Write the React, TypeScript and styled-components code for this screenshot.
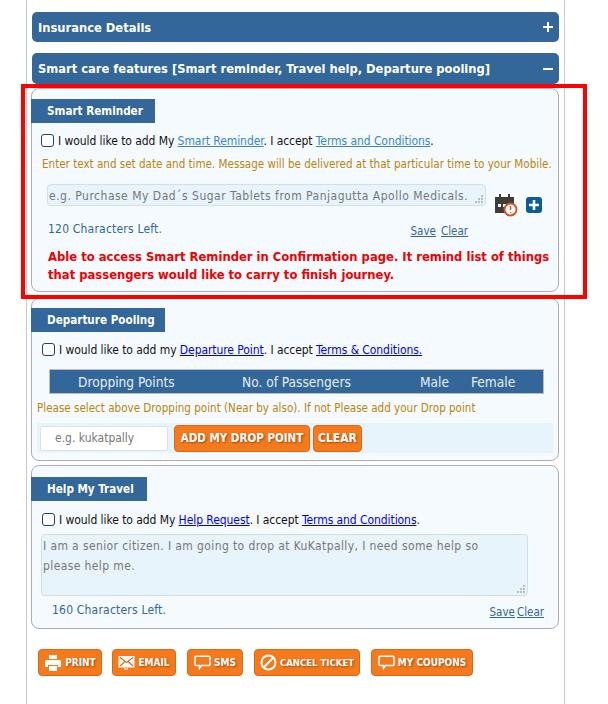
import styled, { createGlobalStyle } from 'styled-components';

const GlobalStyle = createGlobalStyle`
  html, body {
    margin: 0;
    padding: 0;
    background: #fff;
    height: 704px;
    overflow: hidden;
  }
  body {
    font-family: "DejaVu Sans", "Noto Sans", sans-serif;
    font-stretch: condensed;
    font-size: 12px;
    color: #111;
  }
`;

const Page = styled.div`
  position: relative;
  width: 608px;
  height: 704px;
  overflow: hidden;
`;

const Column = styled.div`
  box-sizing: border-box;
  margin-left: 26px;
  width: 539px;
  height: 704px;
  padding: 12px 5px 0 5px;
  border-left: 1px solid #c8c8c8;
  border-right: 1px solid #c8c8c8;
`;

const AccordionBar = styled.div<{ $gap: number; $height: number }>`
  box-sizing: border-box;
  display: flex;
  align-items: center;
  justify-content: space-between;
  width: 527px;
  height: ${p => p.$height}px;
  padding: 0 5px 0 6px;
  margin-bottom: ${p => p.$gap}px;
  background: #336699;
  border-radius: 5px;
  color: #fff;
  font-weight: 700;
  font-size: 12.8px;
`;

const Panel = styled.section<{ $height: number; $gap: number; $pad: number }>`
  box-sizing: border-box;
  height: ${p => p.$height}px;
  margin-bottom: ${p => p.$gap}px;
  margin-left: -1px;
  width: 528px;
  padding-top: ${p => p.$pad}px;
  background: #f5faff;
  border: 1px solid #aeaeae;
  border-radius: 8px;
`;

const PanelTitle = styled.div<{ $width: number }>`
  box-sizing: border-box;
  width: ${p => p.$width}px;
  height: 24px;
  margin-left: -1px;
  padding-left: 16px;
  background: #336699;
  color: #fff;
  font-weight: 700;
  font-size: 11.6px;
  line-height: 25px;
`;

const ConsentRow = styled.label<{ $left: number; $top: number }>`
  display: flex;
  align-items: center;
  gap: 4px;
  margin: ${p => p.$top}px 0 0 ${p => p.$left}px;
  height: 18px;
  color: #111;
  font-size: 12px;
  letter-spacing: -0.07px;
  white-space: nowrap;
`;

const Box = styled.span`
  box-sizing: border-box;
  display: inline-block;
  width: 13px;
  height: 13px;
  background: #fff;
  border: 1px solid #27406b;
  border-radius: 3px;
  flex: none;
  margin-top: -2px;
`;

const Link = styled.a<{ $soft?: boolean }>`
  color: ${p => (p.$soft ? '#3b86c6' : '#0000ee')};
  text-decoration: underline;
  cursor: pointer;
`;

const Hint = styled.p<{ $left: number; $top: number }>`
  margin: ${p => p.$top}px 0 0 ${p => p.$left}px;
  color: #b8860b;
  font-size: 11.55px;
  line-height: 16px;
  white-space: nowrap;
`;

const ReminderRow = styled.div<{ $top: number; $left: number }>`
  display: flex;
  align-items: flex-start;
  margin: ${p => p.$top}px 0 0 ${p => p.$left}px;
`;

const NoteField = styled.div<{ $width: number; $height: number; $spacing: number; $inset: number }>`
  box-sizing: border-box;
  position: relative;
  width: ${p => p.$width}px;
  height: ${p => p.$height}px;
  padding: 1px ${p => p.$inset}px 1px 1px;
  background: #e8f4fc;
  border: 1px solid #d6dde3;
  border-radius: 4px;
  color: #777;
  font-size: 12px;
  letter-spacing: ${p => p.$spacing}px;
  line-height: 20px;
`;

const Grip = styled.svg`
  position: absolute;
  right: 1px;
  bottom: 1px;
`;

const IconSlot = styled.svg<{ $left: number; $top: number }>`
  flex: none;
  margin: ${p => p.$top}px 0 0 ${p => p.$left}px;
`;

const ActionRow = styled.div<{ $top: number; $left: number; $right: number }>`
  display: flex;
  align-items: center;
  justify-content: space-between;
  margin: ${p => p.$top}px ${p => p.$right}px 0 ${p => p.$left}px;
  height: 18px;
`;

const Remaining = styled.span`
  color: #336699;
  font-size: 12px;
  letter-spacing: 0.2px;
`;

const SmallLinks = styled.span<{ $gap: number }>`
  display: flex;
  gap: ${p => p.$gap}px;
  margin-top: 3px;
`;

const QuietLink = styled.a`
  color: #336699;
  font-size: 11.5px;
  text-decoration: underline;
  cursor: pointer;
`;

const Notice = styled.p`
  margin: 10px 0 0 16px;
  color: #f00000;
  font-weight: 700;
  font-size: 12.9px;
  line-height: 18px;
  white-space: nowrap;
`;

const TableHead = styled.div`
  box-sizing: border-box;
  display: grid;
  grid-template-columns: 164px 178px 51px 74px;
  align-items: center;
  width: 495px;
  height: 25px;
  margin: 10px 0 0 17px;
  background: #336699;
  border: 1px solid #bcbcbc;
  color: #e6eef6;
  font-size: 13.6px;
  padding-left: 28px;
`;

const DropRow = styled.div`
  display: flex;
  align-items: center;
  width: 516px;
  height: 30px;
  margin: 7px 0 0 5px;
  padding-left: 3px;
  box-sizing: border-box;
  background: #e8f4fc;
`;

const DropInput = styled.div`
  box-sizing: border-box;
  width: 128px;
  height: 25px;
  padding-left: 14px;
  background: #fff;
  border: 1px solid #dde2e8;
  border-radius: 2px;
  color: #777;
  font-size: 12px;
  line-height: 23px;
`;

const OrangeButton = styled.button<{ $left: number; $width: number; $size: number }>`
  box-sizing: border-box;
  display: inline-flex;
  align-items: center;
  justify-content: center;
  gap: 3px;
  flex: none;
  width: ${p => p.$width}px;
  height: 27px;
  margin-left: ${p => p.$left}px;
  padding: 0;
  background: #f47a1c;
  border: 1px solid #d9681f;
  border-radius: 4px;
  color: #fff;
  font-family: inherit;
  font-stretch: condensed;
  font-weight: 700;
  font-size: ${p => p.$size}px;
  text-shadow: 1px 1px 2px #9c4a10;
  white-space: nowrap;
`;

const ButtonBar = styled.div`
  display: flex;
  margin: 20px 0 0 6px;
`;

const Annotation = styled.div`
  position: absolute;
  left: 21px;
  top: 84px;
  width: 566px;
  height: 215px;
  box-sizing: border-box;
  border: 4px solid #ff0000;
  pointer-events: none;
`;

const grip = (
  <Grip width="10" height="10" viewBox="0 0 10 10" fill="#b5bcc2">
    <rect x="7" y="1" width="2" height="2" />
    <rect x="4" y="4" width="2" height="2" />
    <rect x="7" y="4" width="2" height="2" />
    <rect x="1" y="7" width="2" height="2" />
    <rect x="4" y="7" width="2" height="2" />
    <rect x="7" y="7" width="2" height="2" />
  </Grip>
);

const CalendarClock = () => (
  <IconSlot $left={8} $top={9} width="24" height="24" viewBox="0 0 24 24">
    <rect width="24" height="24" fill="#fff" />
    <path d="M1 4h4V1h2v3h7V1h2v3h4v9a6 6 0 0 0-7 7H1z" fill="#3d3d3d" />
    <rect x="4" y="11" width="3" height="3" fill="#fff" />
    <rect x="9" y="11" width="3" height="3" fill="#fff" />
    <circle cx="16.5" cy="16.5" r="6" fill="#fff" stroke="#dd4b17" strokeWidth="1.8" />
    <path d="M16.5 13v4M16.5 19v1" stroke="#dd4b17" strokeWidth="1.4" />
  </IconSlot>
);

const PlusTile = () => (
  <IconSlot $left={8} $top={13} width="16" height="16" viewBox="0 0 16 16">
    <rect width="16" height="16" rx="3" fill="#0b5c9e" />
    <path d="M8 3v10M3 8h10" stroke="#fff" strokeWidth="2.6" />
  </IconSlot>
);

const PrintIcon = () => (
  <svg width="18" height="18" viewBox="0 0 18 18" fill="#fff">
    <path d="M5 1h8v4H5z" />
    <path d="M2 6h14a2 2 0 0 1 1 2v5h-3v-2H4v2H1V8a2 2 0 0 1 1-2z" />
    <path d="M5 12h8v5H5z" />
  </svg>
);

const MailIcon = () => (
  <svg width="17" height="15" viewBox="0 0 17 15">
    <rect x="0.5" y="1" width="16" height="11.5" fill="#fff" />
    <path d="M2 2.5l6.5 5 6.5-5M2 11l5-4.5M15 11l-5-4.5" stroke="#d9681f" strokeWidth="1.2" fill="none" />
    <path d="M6 14h4" stroke="#fff" />
  </svg>
);

const ChatIcon = () => (
  <svg width="17" height="15" viewBox="0 0 17 15" fill="none">
    <path d="M2 1.2h13a1 1 0 0 1 1 1v7.2a1 1 0 0 1-1 1H7.5L5.5 13.5v-3.1H2a1 1 0 0 1-1-1V2.2a1 1 0 0 1 1-1z" stroke="#fff" strokeWidth="1.5" />
  </svg>
);

const BanIcon = () => (
  <svg width="17" height="17" viewBox="0 0 17 17" fill="none" stroke="#fff" strokeWidth="2">
    <circle cx="8.5" cy="8.5" r="7" />
    <path d="M3.8 13.2l9.4-9.4" />
  </svg>
);

export default function App() {
  return (
    <Page>
      <GlobalStyle />
      <Column>
        <AccordionBar $gap={11} $height={30}>
          Insurance Details
          <svg width="12" height="12" viewBox="0 0 12 12"><path d="M6 1v10M1 6h10" stroke="#fff" strokeWidth="2" /></svg>
        </AccordionBar>
        <AccordionBar $gap={4} $height={31}>
          Smart care features [Smart reminder, Travel help, Departure pooling]
          <svg width="12" height="12" viewBox="0 0 12 12"><path d="M1 6h10" stroke="#fff" strokeWidth="2" /></svg>
        </AccordionBar>

        <Panel $height={204} $gap={6} $pad={10}>
          <PanelTitle $width={124}>Smart Reminder</PanelTitle>
          <ConsentRow $left={9} $top={9}>
            <Box />
            <span>I would like to add My <Link $soft>Smart Reminder</Link>. I accept <Link $soft>Terms and Conditions</Link>.</span>
          </ConsentRow>
          <Hint $left={10} $top={6}>Enter text and set date and time. Message will be delivered at that particular time to your Mobile.</Hint>
          <ReminderRow $top={12} $left={15}>
            <NoteField $width={439} $height={22} $spacing={0.5} $inset={2}>
              e.g. Purchase My Dad´s Sugar Tablets from Panjagutta Apollo Medicals.
              {grip}
            </NoteField>
            <CalendarClock />
            <PlusTile />
          </ReminderRow>
          <ActionRow $top={3} $left={16} $right={90}>
            <Remaining>120 Characters Left.</Remaining>
            <SmallLinks $gap={5}><QuietLink>Save</QuietLink><QuietLink>Clear</QuietLink></SmallLinks>
          </ActionRow>
          <Notice>
            Able to access Smart Reminder in Confirmation page. It remind list of things<br />
            that passengers would like to carry to finish journey.
          </Notice>
        </Panel>

        <Panel $height={163} $gap={4} $pad={9}>
          <PanelTitle $width={134}>Departure Pooling</PanelTitle>
          <ConsentRow $left={10} $top={9}>
            <Box />
            <span>I would like to add my <Link>Departure Point</Link>. I accept <Link>Terms &amp; Conditions.</Link></span>
          </ConsentRow>
          <TableHead>
            <span>Dropping Points</span>
            <span>No. of Passengers</span>
            <span>Male</span>
            <span>Female</span>
          </TableHead>
          <Hint $left={5} $top={6}>Please select above Dropping point (Near by also). If not Please add your Drop point</Hint>
          <DropRow>
            <DropInput>e.g. kukatpally</DropInput>
            <OrangeButton $left={6} $width={136} $size={11.5}>ADD MY DROP POINT</OrangeButton>
            <OrangeButton $left={3} $width={49} $size={12}>CLEAR</OrangeButton>
          </DropRow>
        </Panel>

        <Panel $height={164} $gap={0} $pad={11}>
          <PanelTitle $width={116}>Help My Travel</PanelTitle>
          <ConsentRow $left={10} $top={10}>
            <Box />
            <span>I would like to add My <Link>Help Request</Link>. I accept <Link>Terms and Conditions</Link>.</span>
          </ConsentRow>
          <ReminderRow $top={5} $left={9}>
            <NoteField $width={487} $height={62} $spacing={0.39} $inset={30}>
              I am a senior citizen. I am going to drop at KuKatpally, I need some help so please help me.
              {grip}
            </NoteField>
          </ReminderRow>
          <ActionRow $top={5} $left={20} $right={14}>
            <Remaining>160 Characters Left.</Remaining>
            <SmallLinks $gap={2}><QuietLink>Save</QuietLink><QuietLink>Clear</QuietLink></SmallLinks>
          </ActionRow>
        </Panel>

        <ButtonBar>
          <OrangeButton $left={0} $width={64} $size={10}><PrintIcon />PRINT</OrangeButton>
          <OrangeButton $left={10} $width={64} $size={10}><MailIcon />EMAIL</OrangeButton>
          <OrangeButton $left={11} $width={56} $size={10}><ChatIcon />SMS</OrangeButton>
          <OrangeButton $left={11} $width={106} $size={9.5}><BanIcon />CANCEL TICKET</OrangeButton>
          <OrangeButton $left={11} $width={102} $size={10}><ChatIcon />MY COUPONS</OrangeButton>
        </ButtonBar>
      </Column>
      <Annotation />
    </Page>
  );
}
